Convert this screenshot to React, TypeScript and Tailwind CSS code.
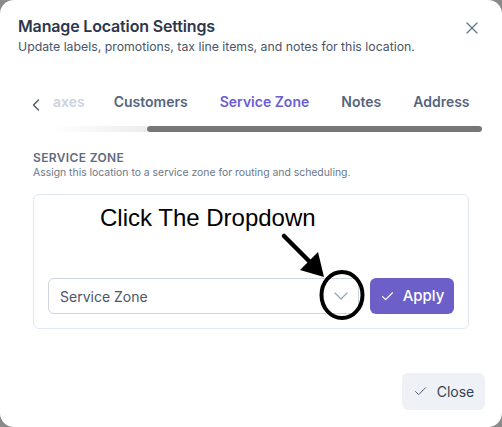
import { Check, ChevronDown, ChevronLeft, X } from 'lucide-react';

const tabs = ['Customers', 'Service Zone', 'Notes', 'Address'];

export default function App() {
  return (
    <div className="w-[502px] h-[427px] bg-[#8a8a8a] overflow-hidden">
      <div className="relative w-full h-full bg-white rounded-[14px] flex flex-col font-['Inter',sans-serif] overflow-hidden">
        {/* header */}
        <div className="px-[18px] pt-[15px] flex justify-between">
          <div>
            <h2 className="text-[16px] leading-[22px] font-semibold tracking-[-0.01em] text-[#2d3748]">Manage Location Settings</h2>
            <p className="text-[12.3px] leading-5 text-[#4a5568]">Update labels, promotions, tax line items, and notes for this location.</p>
          </div>
          <button className="mt-[3px] mr-[2px] h-[20px] text-[#64748b]">
            <X size={20} strokeWidth={1.5} />
          </button>
        </div>

        {/* tabs */}
        <div className="mt-[33px] h-[22px] flex items-center pl-[26px] overflow-hidden whitespace-nowrap">
          <ChevronLeft size={20} strokeWidth={1.6} className="text-[#475569] mt-[8px] mr-[7px] shrink-0" />
          <span className="text-[14px] font-semibold text-[#cdd3dc] mr-[29px]">axes</span>
          <div className="flex gap-[32px]">
            {tabs.map((t) => (
              <span
                key={t}
                className={
                  t === 'Service Zone'
                    ? 'text-[14px] font-semibold text-[#6b5dd3]'
                    : 'text-[14px] font-semibold text-[#56657e]'
                }
              >
                {t}
              </span>
            ))}
          </div>
        </div>
        <div className="mt-[14px] ml-[52px] mr-[20px] h-[6px] flex">
          <div className="w-[95px] h-full bg-gradient-to-r from-white to-[#ececec]" />
          <div className="flex-1 h-full rounded-full bg-[#777777]" />
        </div>

        {/* section */}
        <div className="px-[33px] mt-[18px]">
          <div className="text-[12px] leading-4 font-semibold tracking-[0.03em] text-[#5f6b7e]">SERVICE ZONE</div>
          <div className="text-[10.4px] leading-[14px] text-[#6b778a]">Assign this location to a service zone for routing and scheduling.</div>

          <div className="mt-[14px] border border-[#e2e8f0] rounded-md px-[14px] pt-[9px] pb-[14px]">
            <div className="ml-[52px] text-[24px] leading-[28px] text-black font-['Liberation_Sans',Arial,sans-serif]">
              Click The Dropdown
            </div>
            <div className="mt-[46px] flex gap-[11px] h-[36px]">
              <div className="flex-1 flex items-center justify-between border border-[#cfd6e0] rounded-md pl-[11px] pr-[5px]">
                <span className="text-[14px] text-[#4a5568]">Service Zone</span>
                <ChevronDown size={24} strokeWidth={1.2} className="text-[#94a3b8]" />
              </div>
              <button className="w-[84px] flex items-center justify-center gap-[8px] bg-[#6c5fc7] rounded-md text-white text-[15px] font-medium">
                <Check size={15} strokeWidth={1.8} />
                Apply
              </button>
            </div>
          </div>
        </div>

        {/* footer */}
        <div className="mt-auto flex justify-end pr-[17px] pb-[17px]">
          <button className="w-[83px] h-[37px] flex items-center justify-center gap-[9px] bg-[#eef2f7] rounded-md text-[#334155] text-[14px]">
            <Check size={15} strokeWidth={1.5} className="text-[#475569]" />
            Close
          </button>
        </div>

        {/* annotation overlay */}
        <svg className="absolute inset-0 pointer-events-none" width="502" height="427" viewBox="0 0 502 427">
          <line x1="284" y1="236" x2="311" y2="263" stroke="black" strokeWidth="4.5" strokeLinecap="round" />
          <polygon points="324,277 300,270 318,252" fill="black" />
          <ellipse cx="342" cy="295" rx="20.5" ry="23" fill="none" stroke="black" strokeWidth="4" />
        </svg>
      </div>
    </div>
  );
}
